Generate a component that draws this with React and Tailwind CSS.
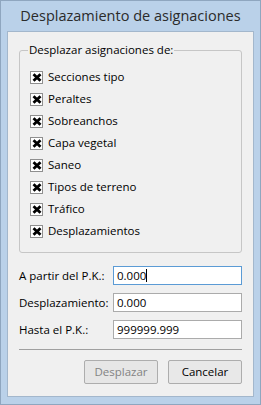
import React from 'react';

const items = [
    'Secciones tipo',
    'Peraltes',
    'Sobreanchos',
    'Capa vegetal',
    'Saneo',
    'Tipos de terreno',
    'Tráfico',
    'Desplazamientos',
];

const fields = [
    { label: 'A partir del P.K.:', value: '0.000', focus: true },
    { label: 'Desplazamiento:', value: '0.000' },
    { label: 'Hasta el P.K.:', value: '999999.999' },
];

const CheckBox = () => (
    <span className="w-[13px] h-[13px] border border-[#8f8f8f] bg-white flex items-center justify-center shrink-0">
        <svg width="10" height="9" viewBox="0 0 10 9">
            <path d="M1.5 1.2 L8.5 7.8 M8.5 1.2 L1.5 7.8" stroke="#000" strokeWidth="2.8" />
        </svg>
    </span>
);

const App = () => {
    return (
        <div
            className="w-[261px] h-[405px] bg-[#bad1e9] border border-[#8fa6bf] flex flex-col text-[11.5px] text-black"
            style={{ fontFamily: '"Open Sans", "Noto Sans", sans-serif' }}
        >
            <div className="h-[30px] flex items-center justify-center text-[14.5px] text-[#2b2b2b]">
                Desplazamiento de asignaciones
            </div>
            <div className="flex-1 mx-[6px] mb-[7px] bg-[#f0f0f0] border border-[#a3b7cc] px-[11px] pt-[12px] flex flex-col">
                <div className="relative border border-[#c6c6c6] rounded-[3px] mt-[6px] h-[203px] pt-[18px] pl-[10px]">
                    <span className="absolute -top-[10px] left-[8px] bg-[#f0f0f0] px-[1px] leading-[18px]">
                        Desplazar asignaciones de:
                    </span>
                    <div className="flex flex-col gap-[6px]">
                        {items.map((item) => (
                            <div key={item} className="flex items-center gap-[5px] h-[16px]">
                                <CheckBox />
                                <span>{item}</span>
                            </div>
                        ))}
                    </div>
                </div>
                <div className="flex flex-col gap-[8px] mt-[13px]">
                    {fields.map((f) => (
                        <div key={f.label} className="flex items-center justify-between">
                            <span>{f.label}</span>
                            <div
                                className={
                                    f.focus
                                        ? 'w-[129px] h-[19px] bg-white border border-[#5b9bd5] px-[3px] flex items-center'
                                        : 'w-[129px] h-[19px] bg-white border border-[#ababab] px-[3px] flex items-center'
                                }
                            >
                                {f.value}
                                {f.focus && <span className="w-px h-[13px] bg-black" />}
                            </div>
                        </div>
                    ))}
                </div>
                <div className="border-t border-[#a0a0a0] mt-[10px]" />
                <div className="flex justify-end gap-[10px] mt-[10px]">
                    <button className="w-[74px] h-[24px] border border-[#adadad] rounded-[2px] bg-[#e6e6e6] text-[#838383]">
                        Desplazar
                    </button>
                    <button className="w-[74px] h-[24px] border border-[#adadad] rounded-[2px] bg-[#e8e8e8] text-black">
                        Cancelar
                    </button>
                </div>
            </div>
        </div>
    );
};

export default App;
